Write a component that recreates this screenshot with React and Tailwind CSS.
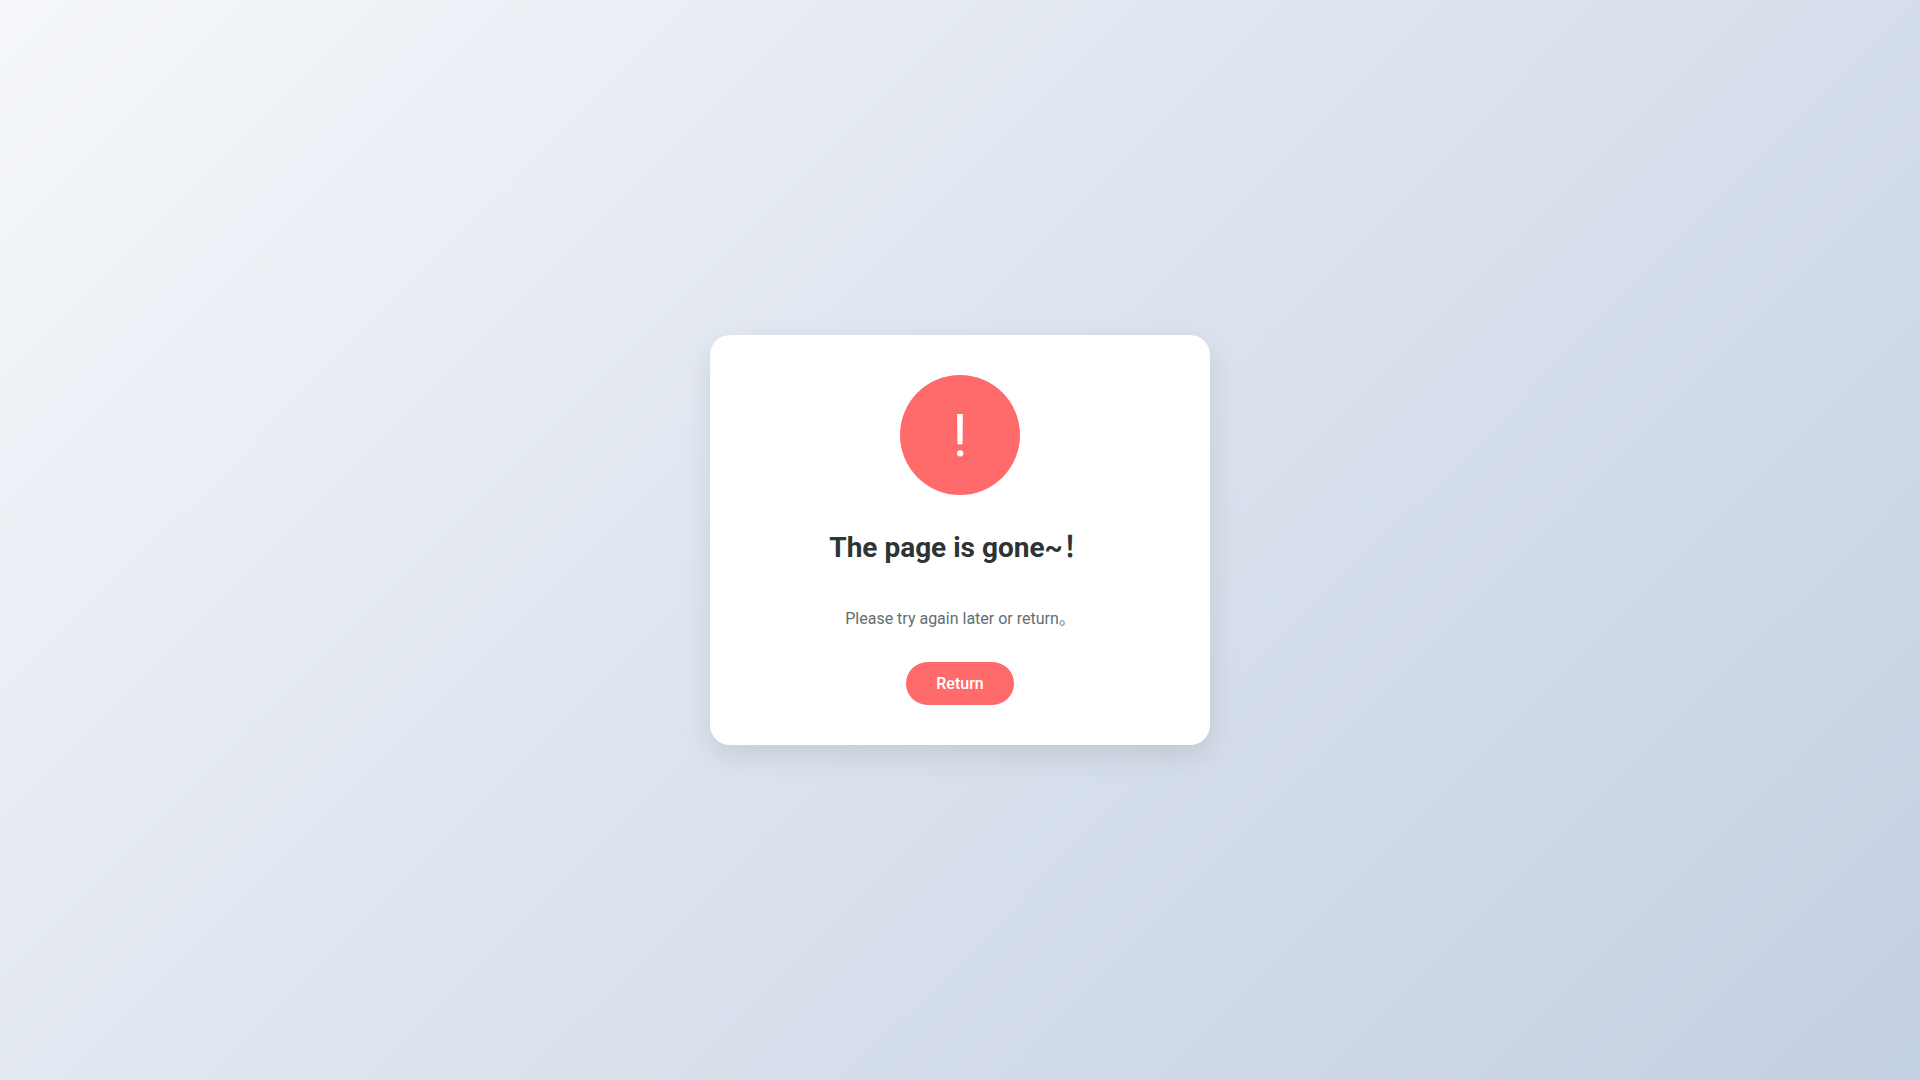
import React from 'react';

const ErrorIcon = () => (
    <div className="mx-auto mb-[30px] flex h-[120px] w-[120px] items-center justify-center rounded-full bg-[#ff6b6b] text-6xl leading-[normal] text-white">
        !
    </div>
);

const App = () => {
    const handleReturn = () => window.history.back();

    return (
        <div lang="zh-CN" className="flex min-h-screen items-center justify-center bg-linear-[135deg,#f5f7fa_0%,#c3cfe2_100%] font-['Roboto',sans-serif]">
            <main className="w-full max-w-[500px] rounded-[20px] bg-white p-10 text-center shadow-[0_10px_30px_rgba(0,0,0,0.1)]">
                <ErrorIcon />
                <h1 className="mb-9 text-[28px] leading-[45px] font-bold text-[#2d3436]">The page is gone~！</h1>
                <p className="mb-[30px] text-base leading-[26px] text-[#636e72]">Please try again later or return。</p>
                <button
                    type="button"
                    onClick={handleReturn}
                    className="cursor-pointer rounded-full bg-[#ff6b6b] px-[30px] py-3 text-base leading-[19px] font-medium text-white"
                >
                    Return
                </button>
            </main>
        </div>
    );
};

export default App;
